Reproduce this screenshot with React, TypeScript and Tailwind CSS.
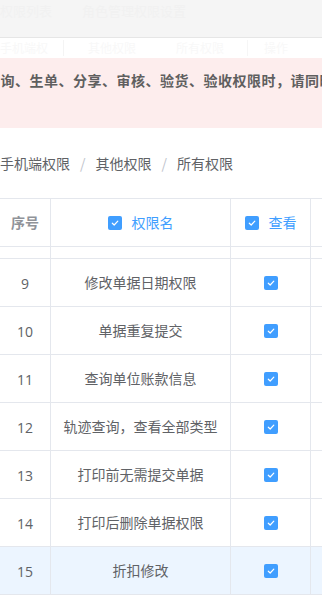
import React from "react";

const rows = [
  { no: 9, name: "修改单据日期权限" },
  { no: 10, name: "单据重复提交" },
  { no: 11, name: "查询单位账款信息" },
  { no: 12, name: "轨迹查询，查看全部类型" },
  { no: 13, name: "打印前无需提交单据" },
  { no: 14, name: "打印后删除单据权限" },
  { no: 15, name: "折扣修改" },
];

const Check = ({ size = 14 }: { size?: number }) => (
  <span
    className="inline-flex items-center justify-center rounded-[2px] bg-[#409eff]"
    style={{ width: size, height: size }}
  >
    <svg width="10" height="10" viewBox="0 0 10 10" fill="none">
      <path d="M2.3 5.2 L4.2 7 L7.8 3.2" stroke="#fff" strokeWidth="1.2" strokeLinecap="round" strokeLinejoin="round" />
    </svg>
  </span>
);

const cell = "border-r border-b border-[#e4e7ed] flex items-center justify-center";

const App = () => {
  return (
    <div
      className="w-[322px] h-[598px] overflow-hidden bg-white text-[#606266]"
      style={{ fontFamily: '"Noto Sans CJK SC", "Noto Sans", sans-serif' }}
    >
      {/* faded top bar */}
      <div className="h-[38px] bg-[#f5f5f5] border-b border-[#e6e6e6] flex items-start pt-[1px] text-[13px] text-[#f1f1f1] whitespace-nowrap">
        <span>权限列表</span>
        <span className="ml-[30px]">角色管理权限设置</span>
      </div>
      <div className="h-[20px] flex items-center text-[12px] text-[#f8f8f8] whitespace-nowrap">
        <span className="w-[64px] border-r border-[#f4f4f4] leading-[16px]">手机端权</span>
        <span className="ml-[24px] w-[160px] border-r border-[#f6f6f6] leading-[16px]">其他权限<span className="ml-[40px]">所有权限</span></span>
        <span className="ml-[16px]">操作</span>
      </div>

      {/* tip banner */}
      <div className="h-[70px] bg-[#fdeded] pt-[12px] whitespace-nowrap overflow-hidden">
        <div className="ml-[-14px] text-[14px] font-bold leading-[20px] tracking-[0.5px] text-[#5f5f5f]">
          查询、生单、分享、审核、验货、验收权限时，请同时勾选查看权限
        </div>
      </div>

      {/* breadcrumb */}
      <div className="h-[70px] flex items-center text-[14px] whitespace-nowrap">
        <span>手机端权限</span>
        <span className="mx-[10px] text-[#c0c4cc]">/</span>
        <span>其他权限</span>
        <span className="mx-[10px] text-[#c0c4cc]">/</span>
        <span>所有权限</span>
      </div>

      {/* table */}
      <div className="w-[400px] border-t border-[#e4e7ed] text-[14px]">
        <div className="grid grid-cols-[51px_180px_80px_89px] h-[48px]">
          <div className={`${cell} font-bold text-[#909399]`}>序号</div>
          <div className={`${cell} gap-[10px] text-[#409eff]`}>
            <Check />
            <span>权限名</span>
          </div>
          <div className={`${cell} gap-[10px] text-[#409eff]`}>
            <Check />
            <span>查看</span>
          </div>
          <div className={cell}></div>
        </div>
        <div className="grid grid-cols-[51px_180px_80px_89px] h-[12px]">
          <div className={cell}></div>
          <div className={cell}></div>
          <div className={cell}></div>
          <div className={cell}></div>
        </div>
        {rows.map((r, i) => (
          <div
            key={r.no}
            className={`grid grid-cols-[51px_180px_80px_89px] h-[48px] ${i === rows.length - 1 ? "bg-[#ecf5ff]" : ""}`}
          >
            <div className={`${cell} pt-[1px]`} style={{ fontFamily: '"Open Sans", "Noto Sans", sans-serif' }}>
              {r.no}
            </div>
            <div className={cell}>{r.name}</div>
            <div className={cell}>
              <Check />
            </div>
            <div className={cell}></div>
          </div>
        ))}
      </div>
    </div>
  );
};

export default App;
